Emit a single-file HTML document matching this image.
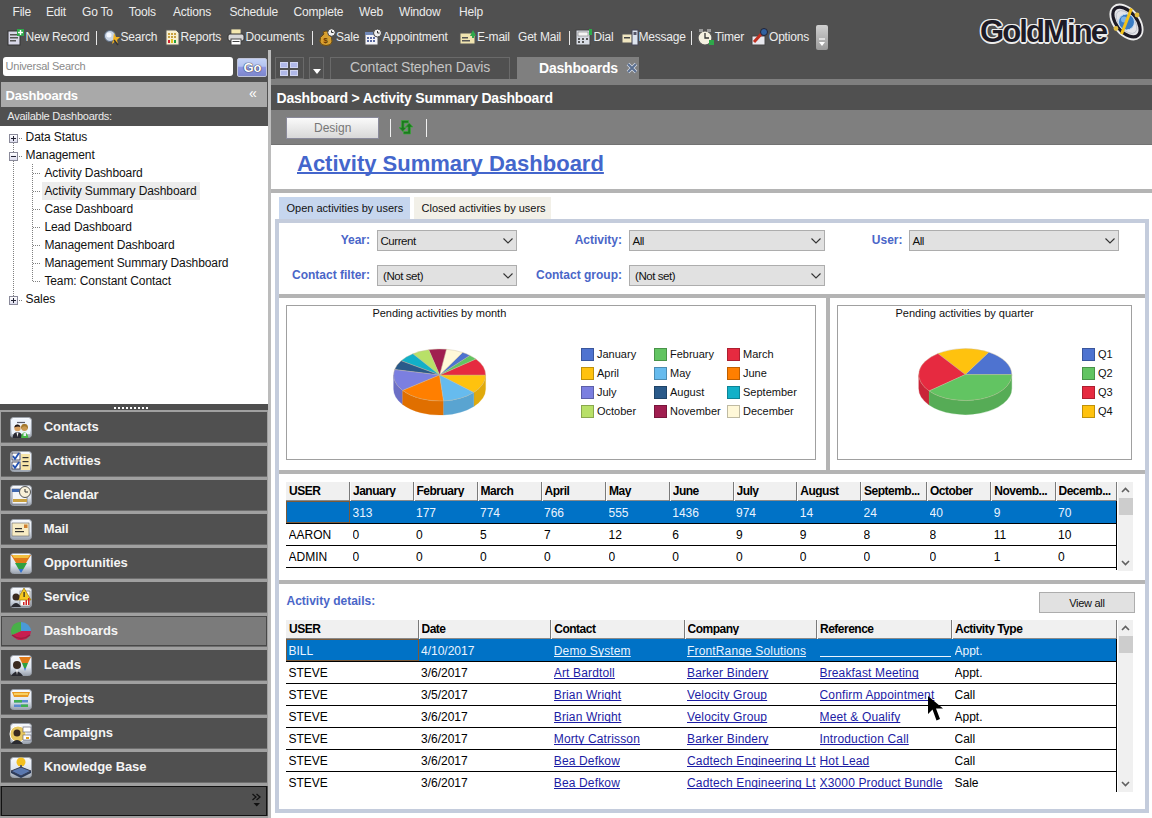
<!DOCTYPE html>
<html><head><meta charset="utf-8"><style>
html,body{margin:0;padding:0;width:1152px;height:818px;overflow:hidden;background:#505050}
body{position:relative;font-family:"Liberation Sans",sans-serif}
body>div{position:absolute}
.t{white-space:nowrap}
</style></head><body>
<div style="left:0px;top:0px;width:1152px;height:818px;background:#505050"></div>
<div class="t" style="left:12.5px;top:5.84px;font-size:12px;line-height:12px;color:#ececec;letter-spacing:-0.2px">File</div>
<div class="t" style="left:46px;top:5.84px;font-size:12px;line-height:12px;color:#ececec;letter-spacing:-0.2px">Edit</div>
<div class="t" style="left:82px;top:5.84px;font-size:12px;line-height:12px;color:#ececec;letter-spacing:-0.2px">Go To</div>
<div class="t" style="left:128.75px;top:5.84px;font-size:12px;line-height:12px;color:#ececec;letter-spacing:-0.2px">Tools</div>
<div class="t" style="left:173px;top:5.84px;font-size:12px;line-height:12px;color:#ececec;letter-spacing:-0.2px">Actions</div>
<div class="t" style="left:229.5px;top:5.84px;font-size:12px;line-height:12px;color:#ececec;letter-spacing:-0.2px">Schedule</div>
<div class="t" style="left:293.5px;top:5.84px;font-size:12px;line-height:12px;color:#ececec;letter-spacing:-0.2px">Complete</div>
<div class="t" style="left:359px;top:5.84px;font-size:12px;line-height:12px;color:#ececec;letter-spacing:-0.2px">Web</div>
<div class="t" style="left:399px;top:5.84px;font-size:12px;line-height:12px;color:#ececec;letter-spacing:-0.2px">Window</div>
<div class="t" style="left:459px;top:5.84px;font-size:12px;line-height:12px;color:#ececec;letter-spacing:-0.2px">Help</div>
<div class="t" style="left:25.5px;top:30.84px;font-size:12px;line-height:12px;color:#ececec;letter-spacing:-0.2px">New Record</div>
<div class="t" style="left:120.5px;top:30.84px;font-size:12px;line-height:12px;color:#ececec;letter-spacing:-0.2px">Search</div>
<div class="t" style="left:180.5px;top:30.84px;font-size:12px;line-height:12px;color:#ececec;letter-spacing:-0.2px">Reports</div>
<div class="t" style="left:245.5px;top:30.84px;font-size:12px;line-height:12px;color:#ececec;letter-spacing:-0.2px">Documents</div>
<div class="t" style="left:336px;top:30.84px;font-size:12px;line-height:12px;color:#ececec;letter-spacing:-0.2px">Sale</div>
<div class="t" style="left:382.5px;top:30.84px;font-size:12px;line-height:12px;color:#ececec;letter-spacing:-0.2px">Appointment</div>
<div class="t" style="left:477px;top:30.84px;font-size:12px;line-height:12px;color:#ececec;letter-spacing:-0.2px">E-mail</div>
<div class="t" style="left:518px;top:30.84px;font-size:12px;line-height:12px;color:#ececec;letter-spacing:-0.2px">Get Mail</div>
<div class="t" style="left:593.5px;top:30.84px;font-size:12px;line-height:12px;color:#ececec;letter-spacing:-0.2px">Dial</div>
<div class="t" style="left:638.5px;top:30.84px;font-size:12px;line-height:12px;color:#ececec;letter-spacing:-0.2px">Message</div>
<div class="t" style="left:714.75px;top:30.84px;font-size:12px;line-height:12px;color:#ececec;letter-spacing:-0.2px">Timer</div>
<div class="t" style="left:769px;top:30.84px;font-size:12px;line-height:12px;color:#ececec;letter-spacing:-0.2px">Options</div>
<div style="left:95.5px;top:31px;width:1px;height:14px;background:#e8e8e8"></div>
<div style="left:311.5px;top:31px;width:1px;height:14px;background:#e8e8e8"></div>
<div style="left:568.5px;top:31px;width:1px;height:14px;background:#e8e8e8"></div>
<div style="left:691px;top:31px;width:1px;height:14px;background:#e8e8e8"></div>
<svg style="position:absolute;left:7px;top:28px" width="18" height="18" viewBox="0 0 18 18"><rect x="1" y="3" width="12" height="14" fill="#d8d8e8" stroke="#333" stroke-width="1"/><rect x="3" y="6" width="8" height="1.5" fill="#555"/><rect x="3" y="9" width="8" height="1.5" fill="#555"/><rect x="3" y="12" width="6" height="1.5" fill="#555"/><rect x="10" y="1" width="7" height="7" fill="#2ea84a"/><rect x="12.8" y="2" width="1.4" height="5" fill="#fff"/><rect x="11" y="3.8" width="5" height="1.4" fill="#fff"/></svg>
<svg style="position:absolute;left:102.5px;top:28px" width="18" height="18" viewBox="0 0 18 18"><circle cx="7" cy="8" r="5.5" fill="#c8d4e4" stroke="#5a6a80" stroke-width="1"/><circle cx="6" cy="7" r="2.5" fill="#f4f8ff"/><path d="M11 5 L13 9 L17 9 L14 12 L15 16 L12 13.5 L9 16 L10 12 Z" fill="#f2b320"/><path d="M11 12 L15 17" stroke="#333" stroke-width="1.5"/></svg>
<svg style="position:absolute;left:163.5px;top:28px" width="18" height="18" viewBox="0 0 18 18"><path d="M2 2 H12 L15 5 V17 H2 Z" fill="#f8f0d0" stroke="#5a5a5a" stroke-width="1"/><g fill="#c8a040"><rect x="4" y="5" width="2" height="2"/><rect x="7" y="5" width="2" height="2"/><rect x="10" y="5" width="2" height="2"/><rect x="4" y="8" width="2" height="2"/><rect x="7" y="8" width="2" height="2"/><rect x="10" y="8" width="2" height="2"/></g><rect x="4" y="12" width="2" height="3" fill="#d02030"/><rect x="7" y="11" width="2" height="4" fill="#e0c020"/><rect x="10" y="12" width="2" height="3" fill="#20a040"/></svg>
<svg style="position:absolute;left:227px;top:28px" width="18" height="18" viewBox="0 0 18 18"><rect x="4" y="1" width="10" height="7" fill="#f4e8b0" stroke="#555" stroke-width=".8"/><rect x="1" y="6" width="16" height="7" rx="2" fill="#d8d8d8" stroke="#333" stroke-width="1"/><rect x="4" y="11" width="10" height="6" fill="#fff" stroke="#444" stroke-width="1"/><rect x="5.5" y="13" width="7" height="1" fill="#444"/></svg>
<svg style="position:absolute;left:318px;top:28px" width="18" height="18" viewBox="0 0 18 18"><path d="M5 4 Q8 2 11 4 L10 6 Q15 9 14 14 Q13 17.5 8 17.5 Q3 17.5 2 14 Q1 9 6 6 Z" fill="#d8a030" stroke="#6a4a10" stroke-width="1"/><text x="5.2" y="15" font-size="8" font-weight="bold" fill="#6a3a00" font-family="Liberation Sans">$</text><circle cx="13.5" cy="4.5" r="3.8" fill="#f0f0f0" stroke="#444"/><path d="M13.5 2.5 V4.5 H15.5" stroke="#333" fill="none"/></svg>
<svg style="position:absolute;left:363.5px;top:28px" width="18" height="18" viewBox="0 0 18 18"><rect x="1" y="4" width="13" height="13" fill="#f4f4f8" stroke="#555"/><rect x="1" y="4" width="13" height="3" fill="#7088b8"/><g fill="#5a6aa0"><rect x="3" y="9" width="2" height="2"/><rect x="6" y="9" width="2" height="2"/><rect x="9" y="9" width="2" height="2"/><rect x="3" y="12" width="2" height="2"/><rect x="6" y="12" width="2" height="2"/><rect x="9" y="12" width="2" height="2"/></g><circle cx="13.5" cy="5" r="4" fill="#f0f0f0" stroke="#444"/><path d="M13.5 3 V5 H15.5" stroke="#333" fill="none"/></svg>
<svg style="position:absolute;left:459px;top:28px" width="18" height="18" viewBox="0 0 18 18"><rect x="1" y="5" width="15" height="11" fill="#f0e4b0" stroke="#555"/><rect x="3" y="9" width="6" height="1.5" fill="#555"/><rect x="3" y="12" width="8" height="1.5" fill="#555"/><path d="M11 8 L14 2 L17 8 Z" fill="#2ea84a"/><rect x="13" y="6" width="2" height="4" fill="#2ea84a"/></svg>
<svg style="position:absolute;left:575px;top:28px" width="18" height="18" viewBox="0 0 18 18"><rect x="1" y="2" width="14" height="15" fill="#d8dce4" stroke="#444"/><rect x="3" y="4" width="10" height="4" fill="#f4f4f4" stroke="#666" stroke-width=".5"/><g fill="#555"><rect x="3" y="10" width="2" height="2"/><rect x="7" y="10" width="2" height="2"/><rect x="11" y="10" width="2" height="2"/><rect x="3" y="13" width="2" height="2"/><rect x="7" y="13" width="2" height="2"/></g><rect x="14" y="1" width="3" height="6" fill="#2ea84a"/></svg>
<svg style="position:absolute;left:620.5px;top:28px" width="18" height="18" viewBox="0 0 18 18"><rect x="1" y="6" width="12" height="9" fill="#f0e6c0" stroke="#555"/><rect x="3" y="9" width="6" height="1.5" fill="#444"/><rect x="11" y="2" width="6" height="15" fill="#dde4ee" stroke="#445"/><rect x="12.5" y="4" width="3" height="3" fill="#556"/></svg>
<svg style="position:absolute;left:697px;top:28px" width="18" height="18" viewBox="0 0 18 18"><circle cx="8" cy="10" r="7" fill="#f4f0e0" stroke="#555" stroke-width="1.2"/><path d="M8 5 V10 H12" stroke="#333" stroke-width="1.3" fill="none"/><rect x="2" y="1" width="4" height="3" fill="#999"/><rect x="10" y="1" width="4" height="3" fill="#999"/><rect x="12" y="12" width="5" height="5" fill="#2ea84a"/></svg>
<svg style="position:absolute;left:751px;top:28px" width="18" height="18" viewBox="0 0 18 18"><rect x="1" y="8" width="13" height="9" fill="#e8e8ee" stroke="#444"/><path d="M3 14 L12 4" stroke="#c03020" stroke-width="3"/><circle cx="13" cy="4" r="3.5" fill="#3060a0" stroke="#223"/></svg>
<div style="left:816px;top:25px;width:12px;height:25px;background:linear-gradient(#d0d0d0,#9a9a9a);border-radius:2px"></div>
<svg style="position:absolute;left:818px;top:38px" width="8" height="10" viewBox="0 0 8 10"><path d="M1 1 H7" stroke="#fff" stroke-width="1.2"/><path d="M1 4 L4 8 L7 4 Z" fill="#fff"/></svg>
<div class="t" style="left:980px;top:11.5px;font-size:31px;line-height:40px;font-weight:bold;color:#1d1b26;letter-spacing:-1.9px;text-shadow:1.5px 0 0 #ececec,-1.5px 0 0 #ececec,0 1.5px 0 #ececec,0 -1.5px 0 #ececec,1px 1px 0 #ececec,-1px -1px 0 #ececec,1px -1px 0 #ececec,-1px 1px 0 #ececec">GoldMine</div>
<svg style="position:absolute;left:1104px;top:0px" width="48" height="46" viewBox="0 0 48 46"><g transform="rotate(50 22.5 22)"><ellipse cx="22.5" cy="22" rx="19" ry="11.5" fill="#ececec" stroke="#ececec" stroke-width="4"/><ellipse cx="22.5" cy="22" rx="17.5" ry="10" fill="#e4e4e8" stroke="#1d1b26" stroke-width="3.2"/><ellipse cx="22.5" cy="22" rx="13.5" ry="7.5" fill="none" stroke="#b8bcc8" stroke-width="0.8"/></g><circle cx="22.5" cy="22" r="8" fill="#3a7cc4" stroke="#c8e0f4" stroke-width="1"/><circle cx="20" cy="19.5" r="3" fill="#7cb4e8"/><path d="M27.5 8.5 L17.5 34" stroke="#f2c218" stroke-width="3"/><circle cx="33" cy="15" r="2.4" fill="#e0bc40"/><circle cx="12" cy="28.5" r="2.4" fill="#e0bc40"/></svg>
<div style="left:3px;top:57px;width:229.5px;height:19px;background:#fff;border-radius:3px"></div>
<div class="t" style="left:5.6px;top:61.29px;font-size:11px;line-height:11px;color:#8a8a8a;letter-spacing:-0.25px">Universal Search</div>
<div style="left:237px;top:57.5px;width:30px;height:19px;background:linear-gradient(#c4d2f6 0%,#b4c4f2 42%,#9098e4 50%,#7c86cc 100%);border:1px solid #c0c4d8;box-sizing:border-box;border-radius:2px"></div>
<div class="t" style="left:243.5px;top:60.50px;font-size:13px;line-height:13px;color:#fff;font-weight:bold;text-shadow:0 0 1px #223,0 0 1px #223">Go</div>
<div style="left:1px;top:82px;width:266px;height:25px;background:#a9a9a9"></div>
<div class="t" style="left:5.6px;top:88.80px;font-size:13px;line-height:13px;font-weight:bold;color:#fff;letter-spacing:-0.3px">Dashboards</div>
<div class="t" style="left:249px;top:86.15px;font-size:14px;line-height:14px;color:#fff">&#171;</div>
<div class="t" style="left:7.25px;top:111.29px;font-size:11px;line-height:11px;color:#ececec;letter-spacing:-0.25px">Available Dashboards:</div>
<div style="left:0px;top:126px;width:268px;height:278px;background:#fff"></div>
<div style="left:42px;top:182px;width:158px;height:18px;background:#ececec"></div>
<div class="t" style="left:25.6px;top:131.44px;font-size:12px;line-height:12px;color:#111;letter-spacing:-0.1px">Data Status</div>
<div class="t" style="left:25.6px;top:149.44px;font-size:12px;line-height:12px;color:#111;letter-spacing:-0.1px">Management</div>
<div class="t" style="left:44.4px;top:167.44px;font-size:12px;line-height:12px;color:#111;letter-spacing:-0.1px">Activity Dashboard</div>
<div class="t" style="left:44.4px;top:185.44px;font-size:12px;line-height:12px;color:#111;letter-spacing:-0.1px">Activity Summary Dashboard</div>
<div class="t" style="left:44.4px;top:203.44px;font-size:12px;line-height:12px;color:#111;letter-spacing:-0.1px">Case Dashboard</div>
<div class="t" style="left:44.4px;top:221.44px;font-size:12px;line-height:12px;color:#111;letter-spacing:-0.1px">Lead Dashboard</div>
<div class="t" style="left:44.4px;top:239.44px;font-size:12px;line-height:12px;color:#111;letter-spacing:-0.1px">Management Dashboard</div>
<div class="t" style="left:44.4px;top:257.44px;font-size:12px;line-height:12px;color:#111;letter-spacing:-0.1px">Management Summary Dashboard</div>
<div class="t" style="left:44.4px;top:275.44px;font-size:12px;line-height:12px;color:#111;letter-spacing:-0.1px">Team: Constant Contact</div>
<div class="t" style="left:25.6px;top:293.44px;font-size:12px;line-height:12px;color:#111;letter-spacing:-0.1px">Sales</div>
<div style="left:13px;top:143px;width:1px;height:154px;background-image:linear-gradient(#808080 50%,transparent 50%);background-size:1px 2px"></div>
<div style="left:32px;top:164px;width:1px;height:117px;background-image:linear-gradient(#808080 50%,transparent 50%);background-size:1px 2px"></div>
<div style="left:19px;top:137.6px;width:4px;height:1px;background-image:linear-gradient(90deg,#808080 50%,transparent 50%);background-size:2px 1px"></div>
<div style="left:19px;top:155.6px;width:4px;height:1px;background-image:linear-gradient(90deg,#808080 50%,transparent 50%);background-size:2px 1px"></div>
<div style="left:19px;top:299.6px;width:4px;height:1px;background-image:linear-gradient(90deg,#808080 50%,transparent 50%);background-size:2px 1px"></div>
<div style="left:33px;top:172.6px;width:8px;height:1px;background-image:linear-gradient(90deg,#808080 50%,transparent 50%);background-size:2px 1px"></div>
<div style="left:33px;top:190.6px;width:8px;height:1px;background-image:linear-gradient(90deg,#808080 50%,transparent 50%);background-size:2px 1px"></div>
<div style="left:33px;top:208.6px;width:8px;height:1px;background-image:linear-gradient(90deg,#808080 50%,transparent 50%);background-size:2px 1px"></div>
<div style="left:33px;top:226.6px;width:8px;height:1px;background-image:linear-gradient(90deg,#808080 50%,transparent 50%);background-size:2px 1px"></div>
<div style="left:33px;top:244.6px;width:8px;height:1px;background-image:linear-gradient(90deg,#808080 50%,transparent 50%);background-size:2px 1px"></div>
<div style="left:33px;top:262.6px;width:8px;height:1px;background-image:linear-gradient(90deg,#808080 50%,transparent 50%);background-size:2px 1px"></div>
<div style="left:33px;top:280.6px;width:8px;height:1px;background-image:linear-gradient(90deg,#808080 50%,transparent 50%);background-size:2px 1px"></div>
<div style="left:9px;top:133.6px;width:9px;height:9px;background:linear-gradient(#fff,#dde);border:1px solid #8a8a9a;box-sizing:border-box"></div>
<div style="left:11px;top:137.6px;width:5px;height:1px;background:#223"></div>
<div style="left:13px;top:135.6px;width:1px;height:5px;background:#223"></div>
<div style="left:9px;top:151.6px;width:9px;height:9px;background:linear-gradient(#fff,#dde);border:1px solid #8a8a9a;box-sizing:border-box"></div>
<div style="left:11px;top:155.6px;width:5px;height:1px;background:#223"></div>
<div style="left:9px;top:295.6px;width:9px;height:9px;background:linear-gradient(#fff,#dde);border:1px solid #8a8a9a;box-sizing:border-box"></div>
<div style="left:11px;top:299.6px;width:5px;height:1px;background:#223"></div>
<div style="left:13px;top:297.6px;width:1px;height:5px;background:#223"></div>
<svg style="position:absolute;left:0;top:0" width="0" height="0"><defs><linearGradient id="gfr" x1="0" y1="0" x2="0" y2="1"><stop offset="0" stop-color="#f8fafd"/><stop offset="0.6" stop-color="#dde4ee"/><stop offset="1" stop-color="#9aa2ae"/></linearGradient></defs></svg>
<div style="left:0px;top:404px;width:268px;height:6px;background:#4e4e4e"></div>
<div style="left:114px;top:407px;width:2px;height:2px;background:#fff"></div>
<div style="left:118px;top:407px;width:2px;height:2px;background:#fff"></div>
<div style="left:122px;top:407px;width:2px;height:2px;background:#fff"></div>
<div style="left:126px;top:407px;width:2px;height:2px;background:#fff"></div>
<div style="left:130px;top:407px;width:2px;height:2px;background:#fff"></div>
<div style="left:134px;top:407px;width:2px;height:2px;background:#fff"></div>
<div style="left:138px;top:407px;width:2px;height:2px;background:#fff"></div>
<div style="left:142px;top:407px;width:2px;height:2px;background:#fff"></div>
<div style="left:146px;top:407px;width:2px;height:2px;background:#fff"></div>
<div style="left:0px;top:410px;width:268px;height:2px;background:#a0a0a0"></div>
<div style="left:0px;top:412px;width:268px;height:34px;background:#a0a0a0"></div>
<div style="left:1px;top:442px;width:266px;height:1px;background:#6e6e6e"></div>
<div style="left:1px;top:412px;width:266px;height:30px;background:#505050"></div>
<div class="t" style="left:43.75px;top:420.00px;font-size:13px;line-height:13px;font-weight:bold;color:#f4f4f4;letter-spacing:-0.1px">Contacts</div>
<svg style="position:absolute;left:9px;top:416px" width="24" height="23" viewBox="0 0 24 23"><rect x="1.5" y="1.5" width="21" height="20" rx="3" fill="url(#gfr)" stroke="#9aa0aa" stroke-width="1"/><rect x="3" y="3" width="18" height="15" fill="#eef4fc"/><g fill="#223"><circle cx="9" cy="6.5" r=".8"/><circle cx="11" cy="6.5" r=".8"/><circle cx="13" cy="6.5" r=".8"/><circle cx="15" cy="6.5" r=".8"/></g><circle cx="8.5" cy="12" r="3.2" fill="#d8a060"/><path d="M5.3 11.5 Q6 8 9 8.6 Q11 9 11.2 11 Q9 9.8 5.3 11.5 Z" fill="#201818"/><path d="M3.5 22 Q4 16 8.5 16 Q13 16 13.5 22 Z" fill="#2a2a34"/><path d="M7.5 16.5 L8.5 21 L9.5 16.5 Z" fill="#f4f4f4"/><circle cx="15.5" cy="11.5" r="3.4" fill="#c89850"/><path d="M12 13 Q12 8 15.5 8 Q19 8 19 13 L17.5 11 Q15.5 9.5 13.5 11 Z" fill="#a07830"/><path d="M12 22 Q12.5 16.5 15.5 16.5 Q18.5 16.5 19.5 22 Z" fill="#48b848"/><rect x="14.5" y="17" width="2.5" height="3" fill="#e8eef4"/></svg>
<div style="left:0px;top:446px;width:268px;height:34px;background:#a0a0a0"></div>
<div style="left:1px;top:476px;width:266px;height:1px;background:#6e6e6e"></div>
<div style="left:1px;top:446px;width:266px;height:30px;background:#505050"></div>
<div class="t" style="left:43.75px;top:454.00px;font-size:13px;line-height:13px;font-weight:bold;color:#f4f4f4;letter-spacing:-0.1px">Activities</div>
<svg style="position:absolute;left:9px;top:450px" width="24" height="23" viewBox="0 0 24 23"><rect x="1.5" y="1.5" width="21" height="20" rx="3" fill="url(#gfr)" stroke="#9aa0aa" stroke-width="1"/><rect x="3" y="3" width="8" height="7" fill="#fff" stroke="#334" stroke-width=".8"/><path d="M4 6 L6 9 L10 3" stroke="#2050b0" stroke-width="1.8" fill="none"/><rect x="3" y="12" width="8" height="7" fill="#fff" stroke="#334" stroke-width=".8"/><path d="M4 15 L6 18 L10 12" stroke="#2050b0" stroke-width="1.8" fill="none"/><rect x="12" y="4" width="9" height="16" fill="#f6e4a8"/><g fill="#333"><rect x="13.5" y="7" width="6" height="1.2"/><rect x="13.5" y="11" width="6" height="1.2"/><rect x="13.5" y="15" width="6" height="1.2"/></g></svg>
<div style="left:0px;top:480px;width:268px;height:34px;background:#a0a0a0"></div>
<div style="left:1px;top:510px;width:266px;height:1px;background:#6e6e6e"></div>
<div style="left:1px;top:480px;width:266px;height:30px;background:#505050"></div>
<div class="t" style="left:43.75px;top:488.00px;font-size:13px;line-height:13px;font-weight:bold;color:#f4f4f4;letter-spacing:-0.1px">Calendar</div>
<svg style="position:absolute;left:9px;top:484px" width="24" height="23" viewBox="0 0 24 23"><rect x="1.5" y="1.5" width="21" height="20" rx="3" fill="url(#gfr)" stroke="#9aa0aa" stroke-width="1"/><rect x="3" y="5" width="15" height="15" fill="#f4f6fa" stroke="#556" stroke-width=".6"/><rect x="3" y="5" width="15" height="3" fill="#4068b0"/><g fill="#c8a040"><rect x="4" y="15" width="14" height="3"/></g><circle cx="16" cy="8" r="5.5" fill="#f8f0d8" stroke="#555" stroke-width="1"/><path d="M16 5 V8 H19" stroke="#333" stroke-width="1" fill="none"/></svg>
<div style="left:0px;top:514px;width:268px;height:34px;background:#a0a0a0"></div>
<div style="left:1px;top:544px;width:266px;height:1px;background:#6e6e6e"></div>
<div style="left:1px;top:514px;width:266px;height:30px;background:#505050"></div>
<div class="t" style="left:43.75px;top:522.00px;font-size:13px;line-height:13px;font-weight:bold;color:#f4f4f4;letter-spacing:-0.1px">Mail</div>
<svg style="position:absolute;left:9px;top:518px" width="24" height="23" viewBox="0 0 24 23"><rect x="1.5" y="1.5" width="21" height="20" rx="3" fill="url(#gfr)" stroke="#9aa0aa" stroke-width="1"/><rect x="3" y="5" width="17" height="13" fill="#f8ecc4" stroke="#666" stroke-width=".6"/><rect x="15" y="6.5" width="3.5" height="3.5" fill="#d08030"/><g fill="#333"><rect x="6" y="10" width="7" height="1.2"/><rect x="6" y="13" width="9" height="1.2"/></g></svg>
<div style="left:0px;top:548px;width:268px;height:34px;background:#a0a0a0"></div>
<div style="left:1px;top:578px;width:266px;height:1px;background:#6e6e6e"></div>
<div style="left:1px;top:548px;width:266px;height:30px;background:#505050"></div>
<div class="t" style="left:43.75px;top:556.00px;font-size:13px;line-height:13px;font-weight:bold;color:#f4f4f4;letter-spacing:-0.1px">Opportunities</div>
<svg style="position:absolute;left:9px;top:552px" width="24" height="23" viewBox="0 0 24 23"><rect x="1.5" y="1.5" width="21" height="20" rx="3" fill="url(#gfr)" stroke="#9aa0aa" stroke-width="1"/><path d="M2 3 H22 L17 11 H7 Z" fill="#e07a18"/><path d="M3 3 H21 L19 6 H5 Z" fill="#f4c040"/><path d="M6 11 H18 L14.5 17 H9.5 Z" fill="#30a040"/><path d="M9.5 17 H14.5 L12 21 Z" fill="#3070d0"/></svg>
<div style="left:0px;top:582px;width:268px;height:34px;background:#a0a0a0"></div>
<div style="left:1px;top:612px;width:266px;height:1px;background:#6e6e6e"></div>
<div style="left:1px;top:582px;width:266px;height:30px;background:#505050"></div>
<div class="t" style="left:43.75px;top:590.00px;font-size:13px;line-height:13px;font-weight:bold;color:#f4f4f4;letter-spacing:-0.1px">Service</div>
<svg style="position:absolute;left:9px;top:586px" width="24" height="23" viewBox="0 0 24 23"><rect x="1.5" y="1.5" width="21" height="20" rx="3" fill="url(#gfr)" stroke="#9aa0aa" stroke-width="1"/><rect x="11" y="5" width="10" height="15" fill="#fff" stroke="#666" stroke-width=".6"/><path d="M15 2 L22 14 H8 Z" fill="#f6c820" stroke="#8a6a00" stroke-width=".6"/><rect x="14.5" y="6" width="1.2" height="5" fill="#222"/><g fill="#d02020"><rect x="14" y="16" width="1.5" height="3"/><rect x="16.5" y="14" width="1.5" height="5"/><rect x="19" y="12" width="1.5" height="7"/></g><circle cx="7" cy="11" r="3.5" fill="#3a2a20"/><path d="M2 21 Q7 13 12 21 Z" fill="#2a2a30"/></svg>
<div style="left:0px;top:616px;width:268px;height:34px;background:#a0a0a0"></div>
<div style="left:1px;top:646px;width:266px;height:1px;background:#6e6e6e"></div>
<div style="left:1px;top:616px;width:266px;height:30px;background:#7b7b7b;border:1px solid #484848;box-sizing:border-box"></div>
<div class="t" style="left:43.75px;top:624.00px;font-size:13px;line-height:13px;font-weight:bold;color:#f4f4f4;letter-spacing:-0.1px">Dashboards</div>
<svg style="position:absolute;left:9px;top:620px" width="24" height="23" viewBox="0 0 24 23"><path d="M12 11 L12 2 A10 9 0 0 1 22 11 Z" fill="#4a9ad8"/><path d="M12 11 L22 11 A10 9 0 0 1 3 15 Z" fill="#c81e50"/><path d="M12 11 L3 15 A10 9 0 0 1 12 2 Z" fill="#48b048"/><path d="M3 15 Q12 22 21 15" stroke="#9a2040" stroke-width="1.5" fill="none"/></svg>
<div style="left:0px;top:650px;width:268px;height:34px;background:#a0a0a0"></div>
<div style="left:1px;top:680px;width:266px;height:1px;background:#6e6e6e"></div>
<div style="left:1px;top:650px;width:266px;height:30px;background:#505050"></div>
<div class="t" style="left:43.75px;top:658.00px;font-size:13px;line-height:13px;font-weight:bold;color:#f4f4f4;letter-spacing:-0.1px">Leads</div>
<svg style="position:absolute;left:9px;top:654px" width="24" height="23" viewBox="0 0 24 23"><rect x="1.5" y="1.5" width="21" height="20" rx="3" fill="url(#gfr)" stroke="#9aa0aa" stroke-width="1"/><path d="M10 3 H22 L19 9 H13 Z" fill="#e07a18"/><path d="M13 9 H19 L17 14 H15 Z" fill="#30a040"/><path d="M15 14 H17 L16 17 Z" fill="#3070d0"/><circle cx="8" cy="11" r="4" fill="#3a2a20"/><path d="M2 22 Q8 13 14 22 Z" fill="#2a2a30"/><path d="M7 16 L8 21 L9 16 Z" fill="#eee"/></svg>
<div style="left:0px;top:684px;width:268px;height:34px;background:#a0a0a0"></div>
<div style="left:1px;top:714px;width:266px;height:1px;background:#6e6e6e"></div>
<div style="left:1px;top:684px;width:266px;height:30px;background:#505050"></div>
<div class="t" style="left:43.75px;top:692.00px;font-size:13px;line-height:13px;font-weight:bold;color:#f4f4f4;letter-spacing:-0.1px">Projects</div>
<svg style="position:absolute;left:9px;top:688px" width="24" height="23" viewBox="0 0 24 23"><rect x="1.5" y="1.5" width="21" height="20" rx="3" fill="url(#gfr)" stroke="#9aa0aa" stroke-width="1"/><path d="M3 4 H21 L19 9 H5 Z" fill="#e89a20"/><rect x="5" y="5" width="14" height="2" fill="#f8d060"/><rect x="5" y="12" width="14" height="2.5" fill="#5a8ad0"/><rect x="5" y="12" width="8" height="2.5" fill="#40b050"/><rect x="5" y="16.5" width="14" height="2.5" fill="#5a8ad0"/><rect x="12" y="16.5" width="7" height="2.5" fill="#40b050"/></svg>
<div style="left:0px;top:718px;width:268px;height:34px;background:#a0a0a0"></div>
<div style="left:1px;top:748px;width:266px;height:1px;background:#6e6e6e"></div>
<div style="left:1px;top:718px;width:266px;height:30px;background:#505050"></div>
<div class="t" style="left:43.75px;top:726.00px;font-size:13px;line-height:13px;font-weight:bold;color:#f4f4f4;letter-spacing:-0.1px">Campaigns</div>
<svg style="position:absolute;left:9px;top:722px" width="24" height="23" viewBox="0 0 24 23"><rect x="1.5" y="1.5" width="21" height="20" rx="3" fill="url(#gfr)" stroke="#9aa0aa" stroke-width="1"/><circle cx="9" cy="12" r="8" fill="#e8c860" stroke="#fff" stroke-width="1"/><circle cx="8" cy="11" r="3.5" fill="#3a2a20"/><path d="M2 22 Q8 14 14 22 Z" fill="#2a2a30"/><rect x="14" y="5" width="8" height="5" fill="#fff" stroke="#556" stroke-width=".6"/><rect x="14" y="13" width="8" height="5" fill="#fff" stroke="#556" stroke-width=".6"/><rect x="17" y="15" width="3" height="2" fill="#e0a020"/></svg>
<div style="left:0px;top:752px;width:268px;height:34px;background:#a0a0a0"></div>
<div style="left:1px;top:782px;width:266px;height:1px;background:#6e6e6e"></div>
<div style="left:1px;top:752px;width:266px;height:30px;background:#505050"></div>
<div class="t" style="left:43.75px;top:760.00px;font-size:13px;line-height:13px;font-weight:bold;color:#f4f4f4;letter-spacing:-0.1px">Knowledge Base</div>
<svg style="position:absolute;left:9px;top:756px" width="24" height="23" viewBox="0 0 24 23"><rect x="1.5" y="1.5" width="21" height="20" rx="3" fill="url(#gfr)" stroke="#9aa0aa" stroke-width="1"/><circle cx="12" cy="6" r="4.5" fill="#f4c020"/><rect x="11" y="9" width="2" height="5" fill="#666"/><path d="M2 15 L12 11 L22 15 L12 20 Z" fill="#5a78b0" stroke="#223" stroke-width=".8"/><path d="M2 15 L2 17 L12 22 L22 17 L22 15 L12 20 Z" fill="#2a3a5a"/></svg>
<div style="left:1px;top:786px;width:266px;height:30px;background:#505050;border:1px solid #111;box-sizing:border-box"></div>
<div style="left:0px;top:816px;width:268px;height:2px;background:#a0a0a0"></div>
<svg style="position:absolute;left:251px;top:793px" width="12" height="16" viewBox="0 0 12 16"><path d="M1.5 1 L5 4 L1.5 7 M5.5 1 L9 4 L5.5 7" stroke="#111" stroke-width="1.3" fill="none"/><path d="M2.5 10 H9 L5.75 13.5 Z" fill="#111"/></svg>
<div style="left:268px;top:50px;width:3px;height:768px;background:#bcbcbc"></div>
<div style="left:275px;top:57px;width:29px;height:22px;border:1px solid #6a6a6a;box-sizing:border-box"></div>
<div style="left:280px;top:62px;width:8px;height:6px;background:#b0b8e8;border:1px solid #d0d4f0;box-sizing:border-box"></div>
<div style="left:290px;top:62px;width:8px;height:6px;background:#b0b8e8;border:1px solid #d0d4f0;box-sizing:border-box"></div>
<div style="left:280px;top:70px;width:8px;height:6px;background:#b0b8e8;border:1px solid #d0d4f0;box-sizing:border-box"></div>
<div style="left:290px;top:70px;width:8px;height:6px;background:#b0b8e8;border:1px solid #d0d4f0;box-sizing:border-box"></div>
<div style="left:309px;top:57px;width:15px;height:22px;border:1px solid #6a6a6a;box-sizing:border-box"></div>
<svg style="position:absolute;left:312.5px;top:69px" width="9" height="6"><path d="M0 0 H8 L4 5 Z" fill="#fff"/></svg>
<div style="left:330px;top:57px;width:180px;height:22px;border:1px solid #6a6a6a;border-bottom:none;box-sizing:border-box"></div>
<div class="t" style="left:350px;top:60.45px;font-size:14px;line-height:14px;color:#c4c4c4;letter-spacing:-0.15px">Contact Stephen Davis</div>
<div style="left:517px;top:57px;width:122px;height:22px;background:#7f7f7f"></div>
<div class="t" style="left:539px;top:61.15px;font-size:14px;line-height:14px;font-weight:bold;color:#fff;letter-spacing:-0.2px">Dashboards</div>
<svg style="position:absolute;left:626px;top:62px" width="12" height="12" viewBox="0 0 12 12"><path d="M2 2 L10 10 M10 2 L2 10" stroke="#d8dde8" stroke-width="3.6"/><path d="M2 2 L10 10 M10 2 L2 10" stroke="#5a6f90" stroke-width="2.2"/></svg>
<div style="left:271px;top:79px;width:881px;height:6px;background:#7f7f7f"></div>
<div class="t" style="left:276.5px;top:90.65px;font-size:14px;line-height:14px;font-weight:bold;color:#fff;letter-spacing:-0.2px">Dashboard &gt; Activity Summary Dashboard</div>
<div style="left:271px;top:110px;width:881px;height:35px;background:#7f7f7f"></div>
<div style="left:271px;top:144px;width:881px;height:1px;background:#727272"></div>
<div style="left:287px;top:118px;width:91px;height:20px;background:linear-gradient(#fafafa,#d8d8d8);box-shadow:0 0 0 1px #8a8a9a"></div>
<div class="t" style="left:314px;top:122.34px;font-size:12px;line-height:12px;color:#777">Design</div>
<div style="left:390px;top:119px;width:1px;height:18px;background:#f0f0f0"></div>
<div style="left:426px;top:119px;width:1px;height:18px;background:#f0f0f0"></div>
<svg style="position:absolute;left:399px;top:119.5px" width="15" height="15" viewBox="0 0 15 15"><g fill="#1b7a1e" stroke="#3aa83a" stroke-width="0.7"><path d="M2.5 0.5 H9.5 V3 H5 V7.5 H7.5 L3.75 11.5 L0 7.5 H2.5 Z"/><path d="M11.5 14 H4.5 V11.5 H9 V7 H6.5 L10.25 3 L14 7 H11.5 Z"/></g></svg>
<div style="left:271px;top:145px;width:881px;height:673px;background:#fff"></div>
<div class="t" style="left:297px;top:152.68px;font-size:22px;line-height:22px;font-weight:bold;color:#4466cc;text-decoration:underline;text-decoration-thickness:2px;text-underline-offset:1px;text-decoration-skip-ink:none">Activity Summary Dashboard</div>
<div style="left:271px;top:189px;width:881px;height:4px;background:#b4b4b4"></div>
<div style="left:279px;top:197px;width:131px;height:22px;background:#c6d6ee"></div>
<div class="t" style="left:286.5px;top:202.99px;font-size:11px;line-height:11px;color:#111">Open activities by users</div>
<div style="left:414px;top:197px;width:137px;height:22px;background:#f2f0e8"></div>
<div class="t" style="left:421.5px;top:202.99px;font-size:11px;line-height:11px;color:#111">Closed activities by users</div>
<div style="left:275px;top:219px;width:874px;height:594px;border:4px solid #c4ccdc;box-sizing:border-box"></div>
<div class="t" style="right:782px;top:234.34px;font-size:12px;line-height:12px;font-weight:bold;color:#4a66c8">Year:</div>
<div style="left:377px;top:230px;width:140px;height:21px;background:#e1e1e1;border:1px solid #adadad;box-sizing:border-box"></div>
<div class="t" style="left:380.5px;top:236.27px;font-size:11.5px;line-height:11.5px;color:#111;letter-spacing:-0.45px">Current</div>
<svg style="position:absolute;left:503px;top:238px" width="10" height="6"><path d="M0.5 0.5 L5 5 L9.5 0.5" stroke="#333" stroke-width="1.1" fill="none"/></svg>
<div class="t" style="right:530px;top:234.34px;font-size:12px;line-height:12px;font-weight:bold;color:#4a66c8">Activity:</div>
<div style="left:629px;top:230px;width:196px;height:21px;background:#e1e1e1;border:1px solid #adadad;box-sizing:border-box"></div>
<div class="t" style="left:632.5px;top:236.27px;font-size:11.5px;line-height:11.5px;color:#111;letter-spacing:-0.45px">All</div>
<svg style="position:absolute;left:811px;top:238px" width="10" height="6"><path d="M0.5 0.5 L5 5 L9.5 0.5" stroke="#333" stroke-width="1.1" fill="none"/></svg>
<div class="t" style="right:249.5px;top:234.34px;font-size:12px;line-height:12px;font-weight:bold;color:#4a66c8">User:</div>
<div style="left:909px;top:230px;width:210px;height:21px;background:#e1e1e1;border:1px solid #adadad;box-sizing:border-box"></div>
<div class="t" style="left:912.5px;top:236.27px;font-size:11.5px;line-height:11.5px;color:#111;letter-spacing:-0.45px">All</div>
<svg style="position:absolute;left:1105px;top:238px" width="10" height="6"><path d="M0.5 0.5 L5 5 L9.5 0.5" stroke="#333" stroke-width="1.1" fill="none"/></svg>
<div class="t" style="right:782px;top:268.84px;font-size:12px;line-height:12px;font-weight:bold;color:#4a66c8">Contact filter:</div>
<div style="left:377px;top:265px;width:140px;height:21px;background:#e1e1e1;border:1px solid #adadad;box-sizing:border-box"></div>
<div class="t" style="left:383px;top:271.27px;font-size:11.5px;line-height:11.5px;color:#111;letter-spacing:-0.45px">(Not set)</div>
<svg style="position:absolute;left:503px;top:273px" width="10" height="6"><path d="M0.5 0.5 L5 5 L9.5 0.5" stroke="#333" stroke-width="1.1" fill="none"/></svg>
<div class="t" style="right:530px;top:268.84px;font-size:12px;line-height:12px;font-weight:bold;color:#4a66c8">Contact group:</div>
<div style="left:629px;top:265px;width:196px;height:21px;background:#e1e1e1;border:1px solid #adadad;box-sizing:border-box"></div>
<div class="t" style="left:635px;top:271.27px;font-size:11.5px;line-height:11.5px;color:#111;letter-spacing:-0.45px">(Not set)</div>
<svg style="position:absolute;left:811px;top:273px" width="10" height="6"><path d="M0.5 0.5 L5 5 L9.5 0.5" stroke="#333" stroke-width="1.1" fill="none"/></svg>
<div style="left:279px;top:294px;width:866px;height:4px;background:#b4b4b4"></div>
<div style="left:826px;top:298px;width:4px;height:172px;background:#b4b4b4"></div>
<div style="left:279px;top:470px;width:866px;height:4px;background:#b4b4b4"></div>
<div style="left:279px;top:580px;width:866px;height:4px;background:#b4b4b4"></div>
<div style="left:286px;top:305px;width:530px;height:155px;border:1px solid #a0a0a0;box-sizing:border-box"></div>
<div style="left:837px;top:305px;width:295px;height:155px;border:1px solid #a0a0a0;box-sizing:border-box"></div>
<div class="t" style="left:372.4px;top:307.69px;font-size:11px;line-height:11px;color:#111">Pending activities by month</div>
<div class="t" style="left:895.5px;top:307.69px;font-size:11px;line-height:11px;color:#111">Pending activities by quarter</div>
<svg style="position:absolute;left:0;top:0" width="1152" height="818"><path d="M473.78,392.40 A46,26 0 0 0 485.60,375.00 L485.60,389.00 A46,26 0 0 1 473.78,406.40 Z" fill="#e0aa0c" stroke="#e0aa0c" stroke-width="0.3"/><path d="M393.60,375.00 A46,26 0 0 0 402.62,390.47 L402.62,404.47 A46,26 0 0 1 393.60,389.00 Z" fill="#6c6fc5" stroke="#6c6fc5" stroke-width="0.3"/><path d="M402.62,390.47 A46,26 0 0 0 443.61,400.90 L443.61,414.90 A46,26 0 0 1 402.62,404.47 Z" fill="#e06f00" stroke="#e06f00" stroke-width="0.3"/><path d="M443.61,400.90 A46,26 0 0 0 473.78,392.40 L473.78,406.40 A46,26 0 0 1 443.61,414.90 Z" fill="#59a4d1" stroke="#59a4d1" stroke-width="0.3"/><path d="M439.6,375 L473.78,392.40 A46,26 0 0 0 485.60,375.00 Z" fill="#ffc20e" stroke="#c8b89a" stroke-width="0.4"/><path d="M439.6,375 L485.60,375.00 A46,26 0 0 0 475.85,358.99 Z" fill="#e62a40" stroke="#c8b89a" stroke-width="0.4"/><path d="M439.6,375 L475.85,358.99 A46,26 0 0 0 469.78,355.38 Z" fill="#62c462" stroke="#c8b89a" stroke-width="0.4"/><path d="M439.6,375 L469.78,355.38 A46,26 0 0 0 462.60,352.48 Z" fill="#4e73d0" stroke="#c8b89a" stroke-width="0.4"/><path d="M439.6,375 L462.60,352.48 A46,26 0 0 0 446.40,349.29 Z" fill="#fff8d8" stroke="#c8b89a" stroke-width="0.4"/><path d="M439.6,375 L446.40,349.29 A46,26 0 0 0 428.71,349.74 Z" fill="#a01e50" stroke="#c8b89a" stroke-width="0.4"/><path d="M439.6,375 L428.71,349.74 A46,26 0 0 0 412.89,353.83 Z" fill="#b8e068" stroke="#c8b89a" stroke-width="0.4"/><path d="M439.6,375 L412.89,353.83 A46,26 0 0 0 401.11,360.76 Z" fill="#12b0c8" stroke="#c8b89a" stroke-width="0.4"/><path d="M439.6,375 L401.11,360.76 A46,26 0 0 0 394.61,369.59 Z" fill="#2a5a8a" stroke="#c8b89a" stroke-width="0.4"/><path d="M439.6,375 L394.61,369.59 A46,26 0 0 0 402.62,390.47 Z" fill="#7b7fe0" stroke="#c8b89a" stroke-width="0.4"/><path d="M439.6,375 L402.62,390.47 A46,26 0 0 0 443.61,400.90 Z" fill="#ff7f00" stroke="#c8b89a" stroke-width="0.4"/><path d="M439.6,375 L443.61,400.90 A46,26 0 0 0 473.78,392.40 Z" fill="#66bbee" stroke="#c8b89a" stroke-width="0.4"/><path d="M918.75,374.60 A46.5,26 0 0 0 929.11,390.96 L929.11,404.96 A46.5,26 0 0 1 918.75,388.60 Z" fill="#ca2438" stroke="#ca2438" stroke-width="0.3"/><path d="M929.11,390.96 A46.5,26 0 0 0 1011.75,374.60 L1011.75,388.60 A46.5,26 0 0 1 929.11,404.96 Z" fill="#56ac56" stroke="#56ac56" stroke-width="0.3"/><path d="M965.25,374.6 L1011.75,374.60 A46.5,26 0 0 0 988.71,352.15 Z" fill="#4e73d0" stroke="#c8b89a" stroke-width="0.4"/><path d="M965.25,374.6 L988.71,352.15 A46.5,26 0 0 0 937.92,353.57 Z" fill="#ffc20e" stroke="#c8b89a" stroke-width="0.4"/><path d="M965.25,374.6 L937.92,353.57 A46.5,26 0 0 0 929.11,390.96 Z" fill="#e62a40" stroke="#c8b89a" stroke-width="0.4"/><path d="M965.25,374.6 L929.11,390.96 A46.5,26 0 0 0 1011.75,374.60 Z" fill="#62c462" stroke="#c8b89a" stroke-width="0.4"/></svg>
<div style="left:581px;top:347.5px;width:13px;height:13px;background:#4e73d0;border:1px solid #3a569c;box-sizing:border-box"></div>
<div class="t" style="left:597px;top:349.19px;font-size:11px;line-height:11px;color:#111">January</div>
<div style="left:654px;top:347.5px;width:13px;height:13px;background:#62c462;border:1px solid #499349;box-sizing:border-box"></div>
<div class="t" style="left:670px;top:349.19px;font-size:11px;line-height:11px;color:#111">February</div>
<div style="left:727px;top:347.5px;width:13px;height:13px;background:#e62a40;border:1px solid #ac1f30;box-sizing:border-box"></div>
<div class="t" style="left:743px;top:349.19px;font-size:11px;line-height:11px;color:#111">March</div>
<div style="left:581px;top:366.5px;width:13px;height:13px;background:#ffc20e;border:1px solid #bf910a;box-sizing:border-box"></div>
<div class="t" style="left:597px;top:368.19px;font-size:11px;line-height:11px;color:#111">April</div>
<div style="left:654px;top:366.5px;width:13px;height:13px;background:#66bbee;border:1px solid #4c8cb2;box-sizing:border-box"></div>
<div class="t" style="left:670px;top:368.19px;font-size:11px;line-height:11px;color:#111">May</div>
<div style="left:727px;top:366.5px;width:13px;height:13px;background:#ff7f00;border:1px solid #bf5f00;box-sizing:border-box"></div>
<div class="t" style="left:743px;top:368.19px;font-size:11px;line-height:11px;color:#111">June</div>
<div style="left:581px;top:385.5px;width:13px;height:13px;background:#7b7fe0;border:1px solid #5c5fa8;box-sizing:border-box"></div>
<div class="t" style="left:597px;top:387.19px;font-size:11px;line-height:11px;color:#111">July</div>
<div style="left:654px;top:385.5px;width:13px;height:13px;background:#2a5a8a;border:1px solid #1f4367;box-sizing:border-box"></div>
<div class="t" style="left:670px;top:387.19px;font-size:11px;line-height:11px;color:#111">August</div>
<div style="left:727px;top:385.5px;width:13px;height:13px;background:#12b0c8;border:1px solid #0d8496;box-sizing:border-box"></div>
<div class="t" style="left:743px;top:387.19px;font-size:11px;line-height:11px;color:#111">September</div>
<div style="left:581px;top:404.5px;width:13px;height:13px;background:#b8e068;border:1px solid #8aa84e;box-sizing:border-box"></div>
<div class="t" style="left:597px;top:406.19px;font-size:11px;line-height:11px;color:#111">October</div>
<div style="left:654px;top:404.5px;width:13px;height:13px;background:#a01e50;border:1px solid #78163c;box-sizing:border-box"></div>
<div class="t" style="left:670px;top:406.19px;font-size:11px;line-height:11px;color:#111">November</div>
<div style="left:727px;top:404.5px;width:13px;height:13px;background:#fff8d8;border:1px solid #bfbaa2;box-sizing:border-box"></div>
<div class="t" style="left:743px;top:406.19px;font-size:11px;line-height:11px;color:#111">December</div>
<div style="left:1082px;top:347.5px;width:13px;height:13px;background:#4e73d0;border:1px solid #3a569c;box-sizing:border-box"></div>
<div class="t" style="left:1098px;top:349.19px;font-size:11px;line-height:11px;color:#111">Q1</div>
<div style="left:1082px;top:366.5px;width:13px;height:13px;background:#62c462;border:1px solid #499349;box-sizing:border-box"></div>
<div class="t" style="left:1098px;top:368.19px;font-size:11px;line-height:11px;color:#111">Q2</div>
<div style="left:1082px;top:385.5px;width:13px;height:13px;background:#e62a40;border:1px solid #ac1f30;box-sizing:border-box"></div>
<div class="t" style="left:1098px;top:387.19px;font-size:11px;line-height:11px;color:#111">Q3</div>
<div style="left:1082px;top:404.5px;width:13px;height:13px;background:#ffc20e;border:1px solid #bf910a;box-sizing:border-box"></div>
<div class="t" style="left:1098px;top:406.19px;font-size:11px;line-height:11px;color:#111">Q4</div>
<div style="left:286px;top:482px;width:830px;height:19px;background:#f0f0f0"></div>
<div style="left:286px;top:500px;width:830px;height:1px;background:#8a8a8a"></div>
<div style="left:349px;top:482px;width:1px;height:19px;background:#7a7a7a"></div>
<div style="left:350px;top:482px;width:1px;height:19px;background:#fafafa"></div>
<div style="left:412.5px;top:482px;width:1px;height:19px;background:#7a7a7a"></div>
<div style="left:413.5px;top:482px;width:1px;height:19px;background:#fafafa"></div>
<div style="left:476.5px;top:482px;width:1px;height:19px;background:#7a7a7a"></div>
<div style="left:477.5px;top:482px;width:1px;height:19px;background:#fafafa"></div>
<div style="left:540.5px;top:482px;width:1px;height:19px;background:#7a7a7a"></div>
<div style="left:541.5px;top:482px;width:1px;height:19px;background:#fafafa"></div>
<div style="left:605px;top:482px;width:1px;height:19px;background:#7a7a7a"></div>
<div style="left:606px;top:482px;width:1px;height:19px;background:#fafafa"></div>
<div style="left:668.75px;top:482px;width:1px;height:19px;background:#7a7a7a"></div>
<div style="left:669.75px;top:482px;width:1px;height:19px;background:#fafafa"></div>
<div style="left:732.5px;top:482px;width:1px;height:19px;background:#7a7a7a"></div>
<div style="left:733.5px;top:482px;width:1px;height:19px;background:#fafafa"></div>
<div style="left:796.25px;top:482px;width:1px;height:19px;background:#7a7a7a"></div>
<div style="left:797.25px;top:482px;width:1px;height:19px;background:#fafafa"></div>
<div style="left:860px;top:482px;width:1px;height:19px;background:#7a7a7a"></div>
<div style="left:861px;top:482px;width:1px;height:19px;background:#fafafa"></div>
<div style="left:926px;top:482px;width:1px;height:19px;background:#7a7a7a"></div>
<div style="left:927px;top:482px;width:1px;height:19px;background:#fafafa"></div>
<div style="left:990.25px;top:482px;width:1px;height:19px;background:#7a7a7a"></div>
<div style="left:991.25px;top:482px;width:1px;height:19px;background:#fafafa"></div>
<div style="left:1054.5px;top:482px;width:1px;height:19px;background:#7a7a7a"></div>
<div style="left:1055.5px;top:482px;width:1px;height:19px;background:#fafafa"></div>
<div class="t" style="left:289px;top:485.34px;font-size:12px;line-height:12px;font-weight:bold;width:60px;overflow:hidden;color:#000;letter-spacing:-0.5px">USER</div>
<div class="t" style="left:353px;top:485.34px;font-size:12px;line-height:12px;font-weight:bold;width:59.5px;overflow:hidden;color:#000;letter-spacing:-0.5px">January</div>
<div class="t" style="left:416.5px;top:485.34px;font-size:12px;line-height:12px;font-weight:bold;width:60.0px;overflow:hidden;color:#000;letter-spacing:-0.5px">February</div>
<div class="t" style="left:480.5px;top:485.34px;font-size:12px;line-height:12px;font-weight:bold;width:60.0px;overflow:hidden;color:#000;letter-spacing:-0.5px">March</div>
<div class="t" style="left:544.5px;top:485.34px;font-size:12px;line-height:12px;font-weight:bold;width:60.5px;overflow:hidden;color:#000;letter-spacing:-0.5px">April</div>
<div class="t" style="left:609px;top:485.34px;font-size:12px;line-height:12px;font-weight:bold;width:59.75px;overflow:hidden;color:#000;letter-spacing:-0.5px">May</div>
<div class="t" style="left:672.75px;top:485.34px;font-size:12px;line-height:12px;font-weight:bold;width:59.75px;overflow:hidden;color:#000;letter-spacing:-0.5px">June</div>
<div class="t" style="left:736.5px;top:485.34px;font-size:12px;line-height:12px;font-weight:bold;width:59.75px;overflow:hidden;color:#000;letter-spacing:-0.5px">July</div>
<div class="t" style="left:800.25px;top:485.34px;font-size:12px;line-height:12px;font-weight:bold;width:59.75px;overflow:hidden;color:#000;letter-spacing:-0.5px">August</div>
<div class="t" style="left:864px;top:485.34px;font-size:12px;line-height:12px;font-weight:bold;width:62px;overflow:hidden;color:#000;letter-spacing:-0.5px">Septemb...</div>
<div class="t" style="left:930px;top:485.34px;font-size:12px;line-height:12px;font-weight:bold;width:60.25px;overflow:hidden;color:#000;letter-spacing:-0.5px">October</div>
<div class="t" style="left:994.25px;top:485.34px;font-size:12px;line-height:12px;font-weight:bold;width:60.25px;overflow:hidden;color:#000;letter-spacing:-0.5px">Novemb...</div>
<div class="t" style="left:1058.5px;top:485.34px;font-size:12px;line-height:12px;font-weight:bold;width:56.5px;overflow:hidden;color:#000;letter-spacing:-0.5px">Decemb...</div>
<div style="left:286px;top:501px;width:830px;height:22px;background:#0072c6"></div>
<div style="left:286px;top:501px;width:64px;height:22px;border:1px solid #7a5a3a;box-sizing:border-box"></div>
<div style="left:286px;top:523px;width:830px;height:1px;background:#000"></div>
<div class="t" style="left:288.5px;top:507.34px;font-size:12px;line-height:12px;width:60px;overflow:hidden;color:#eaf4ff;letter-spacing:0px"></div>
<div class="t" style="left:352.5px;top:507.34px;font-size:12px;line-height:12px;width:59.5px;overflow:hidden;color:#eaf4ff;letter-spacing:0px">313</div>
<div class="t" style="left:416.0px;top:507.34px;font-size:12px;line-height:12px;width:60.0px;overflow:hidden;color:#eaf4ff;letter-spacing:0px">177</div>
<div class="t" style="left:480.0px;top:507.34px;font-size:12px;line-height:12px;width:60.0px;overflow:hidden;color:#eaf4ff;letter-spacing:0px">774</div>
<div class="t" style="left:544.0px;top:507.34px;font-size:12px;line-height:12px;width:60.5px;overflow:hidden;color:#eaf4ff;letter-spacing:0px">766</div>
<div class="t" style="left:608.5px;top:507.34px;font-size:12px;line-height:12px;width:59.75px;overflow:hidden;color:#eaf4ff;letter-spacing:0px">555</div>
<div class="t" style="left:672.25px;top:507.34px;font-size:12px;line-height:12px;width:59.75px;overflow:hidden;color:#eaf4ff;letter-spacing:0px">1436</div>
<div class="t" style="left:736.0px;top:507.34px;font-size:12px;line-height:12px;width:59.75px;overflow:hidden;color:#eaf4ff;letter-spacing:0px">974</div>
<div class="t" style="left:799.75px;top:507.34px;font-size:12px;line-height:12px;width:59.75px;overflow:hidden;color:#eaf4ff;letter-spacing:0px">14</div>
<div class="t" style="left:863.5px;top:507.34px;font-size:12px;line-height:12px;width:62px;overflow:hidden;color:#eaf4ff;letter-spacing:0px">24</div>
<div class="t" style="left:929.5px;top:507.34px;font-size:12px;line-height:12px;width:60.25px;overflow:hidden;color:#eaf4ff;letter-spacing:0px">40</div>
<div class="t" style="left:993.75px;top:507.34px;font-size:12px;line-height:12px;width:60.25px;overflow:hidden;color:#eaf4ff;letter-spacing:0px">9</div>
<div class="t" style="left:1058.0px;top:507.34px;font-size:12px;line-height:12px;width:56.5px;overflow:hidden;color:#eaf4ff;letter-spacing:0px">70</div>
<div style="left:286px;top:545px;width:830px;height:1px;background:#000"></div>
<div class="t" style="left:288.5px;top:529.34px;font-size:12px;line-height:12px;width:60px;overflow:hidden;color:#000;letter-spacing:0px">AARON</div>
<div class="t" style="left:352.5px;top:529.34px;font-size:12px;line-height:12px;width:59.5px;overflow:hidden;color:#000;letter-spacing:0px">0</div>
<div class="t" style="left:416.0px;top:529.34px;font-size:12px;line-height:12px;width:60.0px;overflow:hidden;color:#000;letter-spacing:0px">0</div>
<div class="t" style="left:480.0px;top:529.34px;font-size:12px;line-height:12px;width:60.0px;overflow:hidden;color:#000;letter-spacing:0px">5</div>
<div class="t" style="left:544.0px;top:529.34px;font-size:12px;line-height:12px;width:60.5px;overflow:hidden;color:#000;letter-spacing:0px">7</div>
<div class="t" style="left:608.5px;top:529.34px;font-size:12px;line-height:12px;width:59.75px;overflow:hidden;color:#000;letter-spacing:0px">12</div>
<div class="t" style="left:672.25px;top:529.34px;font-size:12px;line-height:12px;width:59.75px;overflow:hidden;color:#000;letter-spacing:0px">6</div>
<div class="t" style="left:736.0px;top:529.34px;font-size:12px;line-height:12px;width:59.75px;overflow:hidden;color:#000;letter-spacing:0px">9</div>
<div class="t" style="left:799.75px;top:529.34px;font-size:12px;line-height:12px;width:59.75px;overflow:hidden;color:#000;letter-spacing:0px">9</div>
<div class="t" style="left:863.5px;top:529.34px;font-size:12px;line-height:12px;width:62px;overflow:hidden;color:#000;letter-spacing:0px">8</div>
<div class="t" style="left:929.5px;top:529.34px;font-size:12px;line-height:12px;width:60.25px;overflow:hidden;color:#000;letter-spacing:0px">8</div>
<div class="t" style="left:993.75px;top:529.34px;font-size:12px;line-height:12px;width:60.25px;overflow:hidden;color:#000;letter-spacing:0px">11</div>
<div class="t" style="left:1058.0px;top:529.34px;font-size:12px;line-height:12px;width:56.5px;overflow:hidden;color:#000;letter-spacing:0px">10</div>
<div style="left:286px;top:567px;width:830px;height:1px;background:#000"></div>
<div class="t" style="left:288.5px;top:551.34px;font-size:12px;line-height:12px;width:60px;overflow:hidden;color:#000;letter-spacing:0px">ADMIN</div>
<div class="t" style="left:352.5px;top:551.34px;font-size:12px;line-height:12px;width:59.5px;overflow:hidden;color:#000;letter-spacing:0px">0</div>
<div class="t" style="left:416.0px;top:551.34px;font-size:12px;line-height:12px;width:60.0px;overflow:hidden;color:#000;letter-spacing:0px">0</div>
<div class="t" style="left:480.0px;top:551.34px;font-size:12px;line-height:12px;width:60.0px;overflow:hidden;color:#000;letter-spacing:0px">0</div>
<div class="t" style="left:544.0px;top:551.34px;font-size:12px;line-height:12px;width:60.5px;overflow:hidden;color:#000;letter-spacing:0px">0</div>
<div class="t" style="left:608.5px;top:551.34px;font-size:12px;line-height:12px;width:59.75px;overflow:hidden;color:#000;letter-spacing:0px">0</div>
<div class="t" style="left:672.25px;top:551.34px;font-size:12px;line-height:12px;width:59.75px;overflow:hidden;color:#000;letter-spacing:0px">0</div>
<div class="t" style="left:736.0px;top:551.34px;font-size:12px;line-height:12px;width:59.75px;overflow:hidden;color:#000;letter-spacing:0px">0</div>
<div class="t" style="left:799.75px;top:551.34px;font-size:12px;line-height:12px;width:59.75px;overflow:hidden;color:#000;letter-spacing:0px">0</div>
<div class="t" style="left:863.5px;top:551.34px;font-size:12px;line-height:12px;width:62px;overflow:hidden;color:#000;letter-spacing:0px">0</div>
<div class="t" style="left:929.5px;top:551.34px;font-size:12px;line-height:12px;width:60.25px;overflow:hidden;color:#000;letter-spacing:0px">0</div>
<div class="t" style="left:993.75px;top:551.34px;font-size:12px;line-height:12px;width:60.25px;overflow:hidden;color:#000;letter-spacing:0px">1</div>
<div class="t" style="left:1058.0px;top:551.34px;font-size:12px;line-height:12px;width:56.5px;overflow:hidden;color:#000;letter-spacing:0px">0</div>
<div style="left:1116px;top:482px;width:1px;height:19px;background:#7a7a7a"></div>
<div style="left:1116px;top:501px;width:1px;height:69px;background:#000"></div>
<div style="left:1118px;top:482px;width:15px;height:89px;background:#f0f0f0"></div>
<div style="left:1119px;top:498px;width:14px;height:17px;background:#cdcdcd"></div>
<svg style="position:absolute;left:1121px;top:487px" width="9" height="6"><path d="M1 5 L4.5 1.5 L8 5" stroke="#606060" stroke-width="1.6" fill="none"/></svg>
<svg style="position:absolute;left:1121px;top:560px" width="9" height="6"><path d="M1 1 L4.5 4.5 L8 1" stroke="#606060" stroke-width="1.6" fill="none"/></svg>
<div class="t" style="left:286.5px;top:594.64px;font-size:12px;line-height:12px;font-weight:bold;color:#4a66c8">Activity details:</div>
<div style="left:1039px;top:592px;width:96px;height:21px;background:#e1e1e1;border:1px solid #adadad;box-sizing:border-box"></div>
<div class="t" style="left:1069.25px;top:597.69px;font-size:11px;line-height:11px;color:#111;letter-spacing:-0.3px">View all</div>
<div style="left:286px;top:620px;width:830px;height:19px;background:#f0f0f0"></div>
<div style="left:286px;top:638px;width:830px;height:1px;background:#8a8a8a"></div>
<div style="left:417.5px;top:620px;width:1px;height:19px;background:#7a7a7a"></div>
<div style="left:418.5px;top:620px;width:1px;height:19px;background:#fafafa"></div>
<div style="left:550.25px;top:620px;width:1px;height:19px;background:#7a7a7a"></div>
<div style="left:551.25px;top:620px;width:1px;height:19px;background:#fafafa"></div>
<div style="left:683.5px;top:620px;width:1px;height:19px;background:#7a7a7a"></div>
<div style="left:684.5px;top:620px;width:1px;height:19px;background:#fafafa"></div>
<div style="left:816px;top:620px;width:1px;height:19px;background:#7a7a7a"></div>
<div style="left:817px;top:620px;width:1px;height:19px;background:#fafafa"></div>
<div style="left:951px;top:620px;width:1px;height:19px;background:#7a7a7a"></div>
<div style="left:952px;top:620px;width:1px;height:19px;background:#fafafa"></div>
<div class="t" style="left:289px;top:623.34px;font-size:12px;line-height:12px;font-weight:bold;width:128.5px;overflow:hidden;color:#000;letter-spacing:-0.5px">USER</div>
<div class="t" style="left:421.5px;top:623.34px;font-size:12px;line-height:12px;font-weight:bold;width:128.75px;overflow:hidden;color:#000;letter-spacing:-0.5px">Date</div>
<div class="t" style="left:554.25px;top:623.34px;font-size:12px;line-height:12px;font-weight:bold;width:129.25px;overflow:hidden;color:#000;letter-spacing:-0.5px">Contact</div>
<div class="t" style="left:687.5px;top:623.34px;font-size:12px;line-height:12px;font-weight:bold;width:128.5px;overflow:hidden;color:#000;letter-spacing:-0.5px">Company</div>
<div class="t" style="left:820px;top:623.34px;font-size:12px;line-height:12px;font-weight:bold;width:131px;overflow:hidden;color:#000;letter-spacing:-0.5px">Reference</div>
<div class="t" style="left:955px;top:623.34px;font-size:12px;line-height:12px;font-weight:bold;width:160px;overflow:hidden;color:#000;letter-spacing:-0.5px">Activity Type</div>
<div style="left:286px;top:639px;width:830px;height:22px;background:#0072c6"></div>
<div style="left:286px;top:639px;width:132.5px;height:22px;border:1px solid #7a5a3a;box-sizing:border-box"></div>
<div style="left:286px;top:661px;width:830px;height:1px;background:#000"></div>
<div class="t" style="left:288.5px;top:645.34px;font-size:12px;line-height:12px;width:128.5px;overflow:hidden;color:#eaf4ff;letter-spacing:0px">BILL</div>
<div class="t" style="left:421.0px;top:645.34px;font-size:12px;line-height:12px;width:128.75px;overflow:hidden;color:#eaf4ff;letter-spacing:0px">4/10/2017</div>
<div class="t" style="left:553.75px;top:645.34px;font-size:12px;line-height:12px;width:129.25px;overflow:hidden;color:#eaf4ff;text-decoration:underline;text-decoration-skip-ink:none;letter-spacing:0.15px">Demo System</div>
<div class="t" style="left:687.0px;top:645.34px;font-size:12px;line-height:12px;width:128.5px;overflow:hidden;color:#eaf4ff;text-decoration:underline;text-decoration-skip-ink:none;letter-spacing:0.15px">FrontRange Solutions</div>
<div class="t" style="left:819.5px;top:645.34px;font-size:12px;line-height:12px;width:131px;overflow:hidden;color:#eaf4ff;text-decoration:underline;text-decoration-skip-ink:none;letter-spacing:0.15px">&#160;&#160;&#160;&#160;&#160;&#160;&#160;&#160;&#160;&#160;&#160;&#160;&#160;&#160;&#160;&#160;&#160;&#160;&#160;&#160;&#160;&#160;&#160;&#160;&#160;&#160;&#160;&#160;&#160;&#160;&#160;&#160;&#160;&#160;&#160;&#160;&#160;&#160;&#160;&#160;&#160;&#160;&#160;&#160;&#160;&#160;&#160;&#160;</div>
<div class="t" style="left:954.5px;top:645.34px;font-size:12px;line-height:12px;width:160px;overflow:hidden;color:#eaf4ff;letter-spacing:0px">Appt.</div>
<div style="left:286px;top:683px;width:830px;height:1px;background:#000"></div>
<div class="t" style="left:288.5px;top:667.34px;font-size:12px;line-height:12px;width:128.5px;overflow:hidden;color:#000;letter-spacing:0px">STEVE</div>
<div class="t" style="left:421.0px;top:667.34px;font-size:12px;line-height:12px;width:128.75px;overflow:hidden;color:#000;letter-spacing:0px">3/6/2017</div>
<div class="t" style="left:553.75px;top:667.34px;font-size:12px;line-height:12px;width:129.25px;overflow:hidden;color:#1c1ca4;text-decoration:underline;text-decoration-skip-ink:none;letter-spacing:0.15px">Art Bardtoll</div>
<div class="t" style="left:687.0px;top:667.34px;font-size:12px;line-height:12px;width:128.5px;overflow:hidden;color:#1c1ca4;text-decoration:underline;text-decoration-skip-ink:none;letter-spacing:0.15px">Barker Bindery</div>
<div class="t" style="left:819.5px;top:667.34px;font-size:12px;line-height:12px;width:131px;overflow:hidden;color:#1c1ca4;text-decoration:underline;text-decoration-skip-ink:none;letter-spacing:0.15px">Breakfast Meeting</div>
<div class="t" style="left:954.5px;top:667.34px;font-size:12px;line-height:12px;width:160px;overflow:hidden;color:#000;letter-spacing:0px">Appt.</div>
<div style="left:286px;top:705px;width:830px;height:1px;background:#000"></div>
<div class="t" style="left:288.5px;top:689.34px;font-size:12px;line-height:12px;width:128.5px;overflow:hidden;color:#000;letter-spacing:0px">STEVE</div>
<div class="t" style="left:421.0px;top:689.34px;font-size:12px;line-height:12px;width:128.75px;overflow:hidden;color:#000;letter-spacing:0px">3/5/2017</div>
<div class="t" style="left:553.75px;top:689.34px;font-size:12px;line-height:12px;width:129.25px;overflow:hidden;color:#1c1ca4;text-decoration:underline;text-decoration-skip-ink:none;letter-spacing:0.15px">Brian Wright</div>
<div class="t" style="left:687.0px;top:689.34px;font-size:12px;line-height:12px;width:128.5px;overflow:hidden;color:#1c1ca4;text-decoration:underline;text-decoration-skip-ink:none;letter-spacing:0.15px">Velocity Group</div>
<div class="t" style="left:819.5px;top:689.34px;font-size:12px;line-height:12px;width:131px;overflow:hidden;color:#1c1ca4;text-decoration:underline;text-decoration-skip-ink:none;letter-spacing:0.15px">Confirm Appointment</div>
<div class="t" style="left:954.5px;top:689.34px;font-size:12px;line-height:12px;width:160px;overflow:hidden;color:#000;letter-spacing:0px">Call</div>
<div style="left:286px;top:727px;width:830px;height:1px;background:#000"></div>
<div class="t" style="left:288.5px;top:711.34px;font-size:12px;line-height:12px;width:128.5px;overflow:hidden;color:#000;letter-spacing:0px">STEVE</div>
<div class="t" style="left:421.0px;top:711.34px;font-size:12px;line-height:12px;width:128.75px;overflow:hidden;color:#000;letter-spacing:0px">3/6/2017</div>
<div class="t" style="left:553.75px;top:711.34px;font-size:12px;line-height:12px;width:129.25px;overflow:hidden;color:#1c1ca4;text-decoration:underline;text-decoration-skip-ink:none;letter-spacing:0.15px">Brian Wright</div>
<div class="t" style="left:687.0px;top:711.34px;font-size:12px;line-height:12px;width:128.5px;overflow:hidden;color:#1c1ca4;text-decoration:underline;text-decoration-skip-ink:none;letter-spacing:0.15px">Velocity Group</div>
<div class="t" style="left:819.5px;top:711.34px;font-size:12px;line-height:12px;width:131px;overflow:hidden;color:#1c1ca4;text-decoration:underline;text-decoration-skip-ink:none;letter-spacing:0.15px">Meet &amp; Qualify</div>
<div class="t" style="left:954.5px;top:711.34px;font-size:12px;line-height:12px;width:160px;overflow:hidden;color:#000;letter-spacing:0px">Appt.</div>
<div style="left:286px;top:749px;width:830px;height:1px;background:#000"></div>
<div class="t" style="left:288.5px;top:733.34px;font-size:12px;line-height:12px;width:128.5px;overflow:hidden;color:#000;letter-spacing:0px">STEVE</div>
<div class="t" style="left:421.0px;top:733.34px;font-size:12px;line-height:12px;width:128.75px;overflow:hidden;color:#000;letter-spacing:0px">3/6/2017</div>
<div class="t" style="left:553.75px;top:733.34px;font-size:12px;line-height:12px;width:129.25px;overflow:hidden;color:#1c1ca4;text-decoration:underline;text-decoration-skip-ink:none;letter-spacing:0.15px">Morty Catrisson</div>
<div class="t" style="left:687.0px;top:733.34px;font-size:12px;line-height:12px;width:128.5px;overflow:hidden;color:#1c1ca4;text-decoration:underline;text-decoration-skip-ink:none;letter-spacing:0.15px">Barker Bindery</div>
<div class="t" style="left:819.5px;top:733.34px;font-size:12px;line-height:12px;width:131px;overflow:hidden;color:#1c1ca4;text-decoration:underline;text-decoration-skip-ink:none;letter-spacing:0.15px">Introduction Call</div>
<div class="t" style="left:954.5px;top:733.34px;font-size:12px;line-height:12px;width:160px;overflow:hidden;color:#000;letter-spacing:0px">Call</div>
<div style="left:286px;top:771px;width:830px;height:1px;background:#000"></div>
<div class="t" style="left:288.5px;top:755.34px;font-size:12px;line-height:12px;width:128.5px;overflow:hidden;color:#000;letter-spacing:0px">STEVE</div>
<div class="t" style="left:421.0px;top:755.34px;font-size:12px;line-height:12px;width:128.75px;overflow:hidden;color:#000;letter-spacing:0px">3/6/2017</div>
<div class="t" style="left:553.75px;top:755.34px;font-size:12px;line-height:12px;width:129.25px;overflow:hidden;color:#1c1ca4;text-decoration:underline;text-decoration-skip-ink:none;letter-spacing:0.15px">Bea Defkow</div>
<div class="t" style="left:687.0px;top:755.34px;font-size:12px;line-height:12px;width:128.5px;overflow:hidden;color:#1c1ca4;text-decoration:underline;text-decoration-skip-ink:none;letter-spacing:0.15px">Cadtech Engineering Lt</div>
<div class="t" style="left:819.5px;top:755.34px;font-size:12px;line-height:12px;width:131px;overflow:hidden;color:#1c1ca4;text-decoration:underline;text-decoration-skip-ink:none;letter-spacing:0.15px">Hot Lead</div>
<div class="t" style="left:954.5px;top:755.34px;font-size:12px;line-height:12px;width:160px;overflow:hidden;color:#000;letter-spacing:0px">Call</div>
<div class="t" style="left:288.5px;top:777.34px;font-size:12px;line-height:12px;width:128.5px;overflow:hidden;color:#000;letter-spacing:0px">STEVE</div>
<div class="t" style="left:421.0px;top:777.34px;font-size:12px;line-height:12px;width:128.75px;overflow:hidden;color:#000;letter-spacing:0px">3/6/2017</div>
<div class="t" style="left:553.75px;top:777.34px;font-size:12px;line-height:12px;width:129.25px;overflow:hidden;color:#1c1ca4;text-decoration:underline;text-decoration-skip-ink:none;letter-spacing:0.15px">Bea Defkow</div>
<div class="t" style="left:687.0px;top:777.34px;font-size:12px;line-height:12px;width:128.5px;overflow:hidden;color:#1c1ca4;text-decoration:underline;text-decoration-skip-ink:none;letter-spacing:0.15px">Cadtech Engineering Lt</div>
<div class="t" style="left:819.5px;top:777.34px;font-size:12px;line-height:12px;width:131px;overflow:hidden;color:#1c1ca4;text-decoration:underline;text-decoration-skip-ink:none;letter-spacing:0.15px">X3000 Product Bundle</div>
<div class="t" style="left:954.5px;top:777.34px;font-size:12px;line-height:12px;width:160px;overflow:hidden;color:#000;letter-spacing:0px">Sale</div>
<div style="left:1116px;top:620px;width:1px;height:19px;background:#7a7a7a"></div>
<div style="left:1116px;top:639px;width:1px;height:153px;background:#000"></div>
<div style="left:1118px;top:620px;width:15px;height:172px;background:#f0f0f0"></div>
<div style="left:1119px;top:636px;width:14px;height:17px;background:#cdcdcd"></div>
<svg style="position:absolute;left:1121px;top:625px" width="9" height="6"><path d="M1 5 L4.5 1.5 L8 5" stroke="#606060" stroke-width="1.6" fill="none"/></svg>
<svg style="position:absolute;left:1121px;top:781px" width="9" height="6"><path d="M1 1 L4.5 4.5 L8 1" stroke="#606060" stroke-width="1.6" fill="none"/></svg>
<svg style="position:absolute;left:927px;top:695px" width="20" height="28" viewBox="0 0 20 28"><path d="M1 1 L1 19 L5.5 14.5 L9.5 25.5 L13 24 L9 13.5 L16 13.5 Z" fill="#000"/></svg>
</body></html>
